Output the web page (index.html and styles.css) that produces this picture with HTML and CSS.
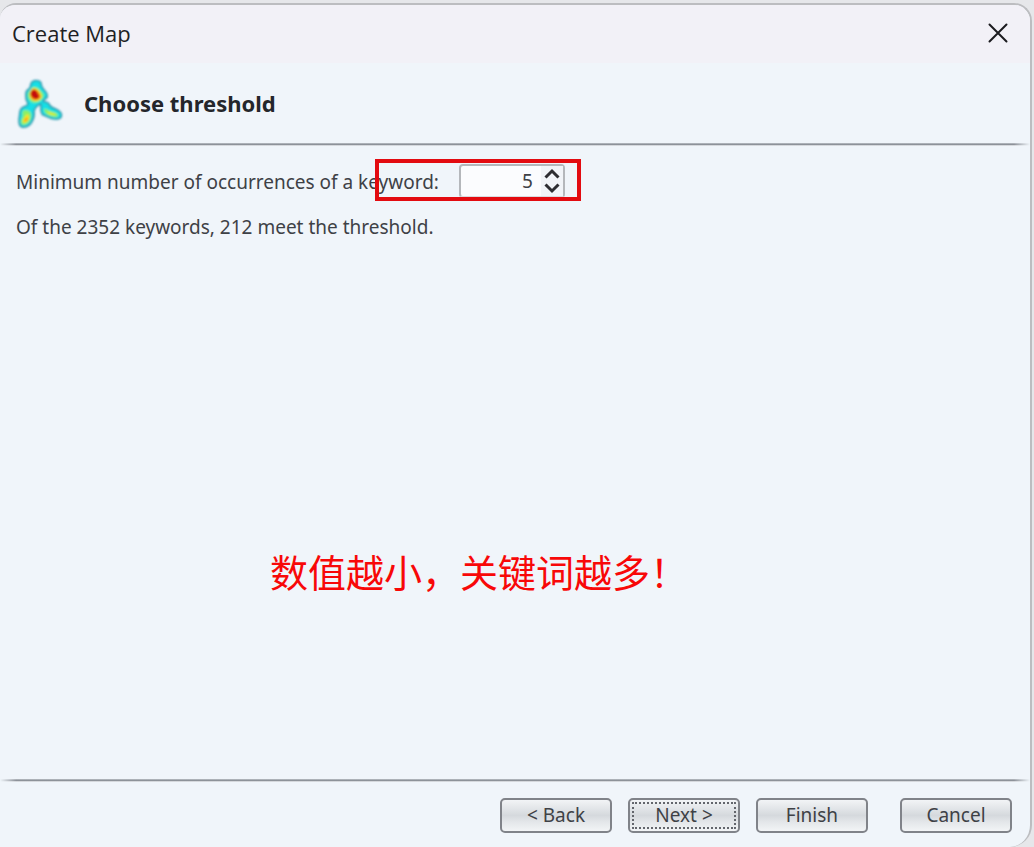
FILE: index.html
```
<!DOCTYPE html>
<html lang="en">
<head>
    <meta charset="UTF-8">
    <meta name="viewport" content="width=device-width, initial-scale=1.0">
    <title>Create Map</title>
    <link rel="stylesheet" href="styles.css">
</head>
<body>
    <div class="dialog">
        <!-- Title bar -->
        <header class="titlebar">
            <h1 class="title">Create Map</h1>
            <button type="button" class="close" aria-label="Close">
                <svg width="20" height="20" viewBox="0 0 20 20" fill="none" stroke="#1b1b1f" stroke-width="2" stroke-linecap="round">
                    <path d="M1.5 1.5L18.5 18.5M18.5 1.5L1.5 18.5"/>
                </svg>
            </button>
        </header>

        <!-- Step heading -->
        <div class="step">
            <svg class="logo" width="60" height="64" viewBox="0 0 60 64">
                <defs>
                    <filter id="soft" x="-20%" y="-20%" width="140%" height="140%">
                        <feGaussianBlur stdDeviation="0.8"/>
                    </filter>
                </defs>
                <g filter="url(#soft)">
                    <path d="M22 11C24 9 30 9 31 12C31 15 33 18 35 20C38 23 38 27 35 28L33 30C35 32 37 30 39 33C40 37 45 37 49 40C53 43 52 48 47 48C41 49 37 45 33 44C30 42 31 37 31 33C28 34 25 36 24 40C25 47 21 56 14 56C9 57 9 52 9 48C10 45 9 41 11 38C13 35 17 36 18 33C18 31 16 30 16 27C16 23 15 20 19 18C21 17 20 13 22 11Z" fill="#19dfe6" stroke="#2c93a8" stroke-width="1.5" stroke-linejoin="round"/>
                    <path d="M23 16C28 15 30 20 34 23C34 29 28 32 24 32C19 31 17 26 18 22Z" fill="#72f07c"/>
                    <path d="M23 17C29 17 31 22 32 26C29 31 25 31 22 29C18 26 19 20 23 17Z" fill="#f6e51d"/>
                    <path d="M23 18C28 18 30 23 31 26C28 30 24 30 22 28C19 24 20 20 23 18Z" fill="#ff8612"/>
                    <path d="M23 19C27 18 27 22 29 24C30 29 25 29 22 26C20 24 20 20 23 19Z" fill="#c40d08"/>
                    <path d="M15 39C20 39 22 42 21 47C20 51 17 54 13 54C10 53 11 49 12 47C14 44 10 40 15 39Z" fill="#8bf066"/>
                    <path d="M17 43C21 45 19 51 14 52C11 50 15 46 17 43Z" fill="#fbe21b"/>
                    <path d="M17 46C19 49 16 51 14 50C14 48 16 48 17 46Z" fill="#ff9d18"/>
                    <path d="M34 38C37 37 39 41 44 41C49 43 50 46 45 46C39 45 34 43 34 38Z" fill="#86f267"/>
                    <path d="M37 41C40 40 42 43 46 43C47 45 39 45 37 41Z" fill="#e3ea2b"/>
                </g>
            </svg>
            <h2 class="step-name">Choose threshold</h2>
        </div>

        <div class="rule"></div>

        <!-- Threshold settings -->
        <main class="content">
            <div class="field">
                <label for="occurrences">Minimum number of occurrences of a keyword:</label>
                <div class="spinner">
                    <input type="number" id="occurrences" value="5" min="1">
                    <div class="arrows">
                        <button type="button" aria-label="Increase" onclick="occurrences.stepUp()">
                            <svg width="16" height="11" viewBox="0 0 16 11" fill="none" stroke="#2d2d31" stroke-width="3"><path d="M1.5 9.5L8 3L14.5 9.5"/></svg>
                        </button>
                        <button type="button" aria-label="Decrease" onclick="occurrences.stepDown()">
                            <svg width="16" height="11" viewBox="0 0 16 11" fill="none" stroke="#2d2d31" stroke-width="3"><path d="M1.5 1.5L8 8L14.5 1.5"/></svg>
                        </button>
                    </div>
                    <div class="highlight"></div>
                </div>
            </div>
            <p class="status">Of the 2352 keywords, 212 meet the threshold.</p>
            <p class="note" lang="zh-CN">数值越小，关键词越多！</p>
        </main>

        <div class="rule"></div>

        <!-- Wizard buttons -->
        <footer class="actions">
            <button type="button" class="btn">&lt; Back</button>
            <button type="button" class="btn btn-default">Next &gt;</button>
            <button type="button" class="btn">Finish</button>
            <button type="button" class="btn btn-cancel">Cancel</button>
        </footer>
    </div>
</body>
</html>
```
FILE: styles.css
```
* {
    box-sizing: border-box;
}
body {
    margin: 0;
    padding: 3px 2px 0 0;
    height: 100vh;
    background: #e6e7ea;
    font-family: "Noto Sans", "Open Sans", sans-serif;
    font-size: 19px;
    color: #3e4146;
    overflow: hidden;
}
h1, h2, p {
    margin: 0;
}
button, input {
    font: inherit;
    color: inherit;
}
.dialog {
    display: flex;
    flex-direction: column;
    height: 100%;
    background: #f0f5fa;
    border: 2px solid #bcbdc0;
    border-width: 2px 2px 0 0;
    border-radius: 16px 18px 22px 0;
    overflow: hidden;
}
.titlebar {
    display: flex;
    align-items: center;
    justify-content: space-between;
    height: 58px;
    padding: 0 22px 2px 12px;
    background: #f2f1f7;
}
.title {
    font-family: "Open Sans", sans-serif;
    font-size: 22px;
    font-weight: 400;
    color: #1f1f24;
}
.close {
    display: flex;
    padding: 0;
    border: 0;
    background: none;
    cursor: pointer;
}
.step {
    display: flex;
    align-items: center;
    gap: 14px;
    height: 80px;
    padding-left: 10px;
}
.step-name {
    font-size: 22px;
    font-weight: 700;
    color: #24262b;
}
.rule {
    height: 3px;
    background: linear-gradient(#bcc1c7, #8d9299 50%, #fafcfe);
    mask-image: linear-gradient(to right, transparent, #000 16px, #000 calc(100% - 16px), transparent);
}
.content {
    flex: 1;
    padding: 18px 16px;
}
.field {
    display: flex;
    align-items: center;
    gap: 20px;
    height: 34px;
    white-space: nowrap;
}
.field label {
    padding-top: 2px;
}
.spinner {
    position: relative;
    display: flex;
    width: 106px;
    height: 34px;
    background: #fbfcfe;
    border: 2px solid #b4b7bb;
    border-bottom-color: #d9dce0;
    border-radius: 4px;
}
.spinner input {
    flex: 1;
    min-width: 0;
    padding: 0 8px 0 0;
    border: 0;
    background: none;
    text-align: right;
    outline: none;
    appearance: textfield;
}
.spinner input::-webkit-inner-spin-button {
    appearance: none;
    margin: 0;
}
.arrows {
    display: flex;
    flex-direction: column;
    justify-content: center;
    gap: 4px;
    width: 22px;
    background: #f1f4f8;
}
.arrows button {
    display: flex;
    justify-content: center;
    padding: 0;
    border: 0;
    background: none;
}
/* Red frame drawn over the label and the spinner */
.highlight {
    position: absolute;
    inset: -7px -18px -5px -86px;
    border: 4px solid #e30b10;
    pointer-events: none;
}
.status {
    margin-top: 15px;
    line-height: 28px;
}
.note {
    margin-top: 300px;
    padding-left: 254px;
    font-family: "Noto Sans CJK SC", sans-serif;
    font-size: 38px;
    font-weight: 400;
    line-height: 60px;
    color: #f80808;
}
.actions {
    display: flex;
    justify-content: flex-end;
    gap: 16px;
    padding: 16px 18px 14px;
}
.btn {
    width: 112px;
    height: 35px;
    padding: 0 0 2px;
    border: 2px solid #808389;
    border-radius: 5px;
    background: linear-gradient(#f2f4f6, #d5d9dd 50%, #e3e6e9 70%, #f2f4f6);
    cursor: pointer;
}
.btn-default {
    outline: 2px dotted #63666c;
    outline-offset: -6px;
}
.btn-cancel {
    margin-left: 16px;
}
```
